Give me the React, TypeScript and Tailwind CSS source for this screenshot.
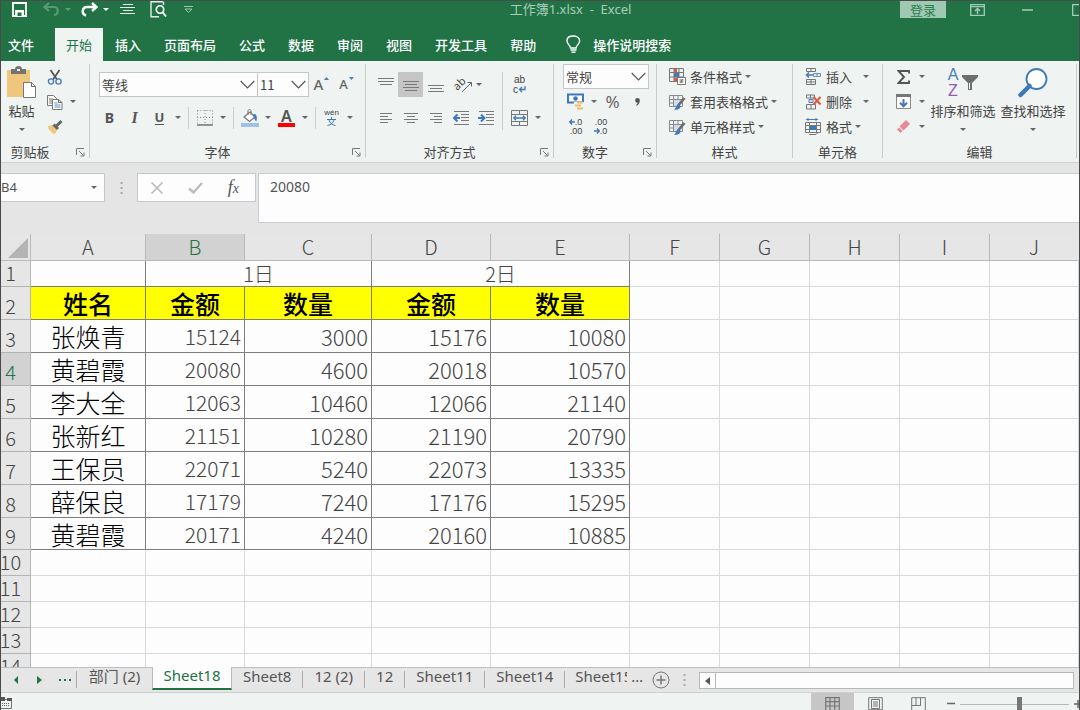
import React from "react";

const CJK = "font-['Noto_Sans_CJK_SC',sans-serif]";
const UI = "font-['Noto_Sans','Noto_Sans_CJK_SC',sans-serif]";
const SMALL = "font-['Liberation_Sans','Noto_Sans_CJK_SC',sans-serif]";

type Kids = { children?: React.ReactNode };

function Ico({ w = 16, h = 16, children }: Kids & { w?: number; h?: number }) {
  return (
    <svg width={w} height={h} viewBox={`0 0 ${w} ${h}`} fill="none" stroke="#666" strokeWidth="1" aria-hidden="true" className="block shrink-0">
      {children}
    </svg>
  );
}

function Tri() {
  return (
    <Ico w={6} h={3}>
      <path d="M0 0h6L3 3z" fill="#666" stroke="none" />
    </Ico>
  );
}

function Caret({ label }: { label: string }) {
  return (
    <button aria-label={`${label}选项`} className="flex h-6 w-3 shrink-0 items-center justify-center">
      <Tri />
    </button>
  );
}

function Tool({ label, active, children }: Kids & { label: string; active?: boolean }) {
  return (
    <button
      aria-label={label}
      className={`flex h-[25px] w-[25px] shrink-0 items-center justify-center ${active ? "bg-[#c6c6c6]" : ""}`}
    >
      {children}
    </button>
  );
}

function Drop({ label, value, className }: { label: string; value: string; className: string }) {
  return (
    <div className={`relative h-[25px] shrink-0 ${className}`}>
      <select aria-label={label} defaultValue={value} className="h-full w-full appearance-none border border-[#c3c6cb] bg-[#fdfdfd] px-0.5 text-[13px] text-[#444]">
        <option>{value}</option>
      </select>
      <div className="pointer-events-none absolute inset-y-0 right-[3px] flex items-center">
        <Ico w={15} h={9}>
          <path d="M.7 1l6.8 6.8L14.300 1" stroke="#555" strokeWidth="1.2" />
        </Ico>
      </div>
    </div>
  );
}

function Group({ name, width, launcher, labelClass = "", children }: Kids & { name: string; width: string; launcher?: boolean; labelClass?: string }) {
  return (
    <section aria-label={name} className={`flex shrink-0 flex-col ${width}`}>
      <div className="mt-[3px] mb-1 flex min-h-0 flex-1 flex-col border-r border-[#c9cccb]">
        <div className="min-h-0 flex-1">{children}</div>
        <div className="flex h-[18px] shrink-0 items-center pt-[5px]">
          <span className={`flex-1 text-center ${labelClass}`}>{name}</span>
          {launcher && (
            <button aria-label={`${name}设置`} className="mr-1 flex w-4 justify-end pt-0.5">
              <Ico w={9} h={9}>
                <path d="M.5 7V.5H8M3 3l4.500 4.500M8 4.500V8H4.500" stroke="#777" />
              </Ico>
            </button>
          )}
        </div>
      </div>
    </section>
  );
}

function Sep() {
  return <div className="mr-[3px] ml-1 h-[22px] w-px shrink-0 bg-[#cfd1d1]" />;
}

function Lines({ d, h = 16 }: { d: string; h?: number }) {
  return (
    <Ico w={16} h={h}>
      <path d={d} stroke="#7a7a7a" />
    </Ico>
  );
}

function MenuRow({ icon, label, caretClass = "ml-[3px]" }: { icon: React.ReactNode; label: string; caretClass?: string }) {
  return (
    <button className="flex h-[25px] items-center">
      {icon}
      <span className="ml-1">{label}</span>
      <span className={caretClass}>
        <Tri />
      </span>
    </button>
  );
}

function BigButton({ icon, label, width }: { icon: React.ReactNode; label: string; width: string }) {
  return (
    <button className={`flex shrink-0 flex-col items-center ${width}`}>
      <span className="flex h-[37px] items-center">{icon}</span>
      <span className="whitespace-nowrap leading-5">{label}</span>
      <span className="flex h-4 items-center">
        <Tri />
      </span>
    </button>
  );
}

const tableIcon = (
  <>
    <path d="M.5 1.500h13v11H.5zM.5 5.500h13M.5 9h13M4.500 1.500v11M9 1.500v11" stroke="#8a8a8a" />
    <path d="M5 6h7v6H5z" fill="#cfdcec" stroke="none" />
    <path d="M15.500 4l-6 7" stroke="#6a6a6a" strokeWidth="2.600" />
    <path d="M9.500 10c-2.500 .5-1.500 3.500-4.500 5.500 3.500 .8 7-.5 6.500-3.500z" fill="#3f79b7" stroke="none" />
  </>
);

function Ribbon() {
  return (
    <div className="flex h-[101px] shrink-0 overflow-hidden bg-[#eff3f2] text-[13px] text-[#444]">
      <Group name="剪贴板" width="w-[89px]" launcher labelClass="pr-[10px]">
        <div className="flex">
          <BigButton
            width="w-[41px]"
            label="粘贴"
            icon={
              <Ico w={31} h={33}>
                <path d="M1 4h23v27H1z" fill="#efc67c" stroke="none" />
                <path d="M5 3h4c0-4 7-4 7 0h4v5H5z" fill="#737373" stroke="none" />
                <path d="M11 3h3v2h-3z" fill="#eee" stroke="none" />
                <path d="M17.500 16.500h8l4 4v11h-12z" fill="#fff" stroke="#777" />
                <path d="M25.500 16.500v4h4" />
              </Ico>
            }
          />
          <div className="flex flex-col">
            <Tool label="剪切">
              <Ico>
                <path d="M3.500 1l6.500 9.500M12.500 1L6 10.500" stroke="#555" strokeWidth="1.700" />
                <circle cx="4" cy="12.500" r="2.600" stroke="#4a7ebb" strokeWidth="1.400" />
                <circle cx="11.500" cy="12.500" r="2.600" stroke="#4a7ebb" strokeWidth="1.400" />
              </Ico>
            </Tool>
            <div className="flex">
              <Tool label="复制">
                <Ico>
                  <path d="M.5 1.500h6l3 3v7h-9zM2 5h4M2 7h4M2 9h3" fill="#fff" stroke="#777" />
                  <path d="M5.500 5.500h6l3.500 3v7H5.500z" fill="#fff" stroke="#777" />
                  <path d="M11.500 5.500v3H15" />
                  <path d="M7.500 9h3M7.500 11h6M7.500 13h6" stroke="#5b8cc4" />
                </Ico>
              </Tool>
              <Caret label="复制" />
            </div>
            <Tool label="格式刷">
              <Ico>
                <path d="M1 7l5-1 4 5-2 4-3-1-1-2-2-1z" fill="#efc67c" stroke="none" />
                <path d="M6.500 5.500l4.500 4.500M9 7.500l5.500-5.500" stroke="#666" strokeWidth="3" />
              </Ico>
            </Tool>
          </div>
        </div>
      </Group>

      <Group name="字体" width="w-[276px]" launcher>
        <div className="flex flex-col gap-2 pt-2">
          <div className="flex pl-[9px]">
            <Drop label="字体" value="等线" className="w-[159px]" />
            <Drop label="字号" value="11" className="-ml-px w-[52px]" />
            <button aria-label="增大字号" className="flex h-[25px] w-[25px] items-center justify-center gap-px">
              <span className={`${UI} text-[15px] font-medium text-[#666]`}>A</span>
              <span className="pb-3"><Ico w={5} h={3}><path d="M0 3h5L2.500 0z" fill="#4a7ebb" stroke="none" /></Ico></span>
            </button>
            <button aria-label="减小字号" className="flex h-[25px] w-[25px] items-center justify-center gap-px">
              <span className={`${UI} text-[13px] font-medium text-[#666]`}>A</span>
              <span className="pb-3"><Ico w={5} h={3}><path d="M0 0h5L2.500 3z" fill="#4a7ebb" stroke="none" /></Ico></span>
            </button>
          </div>
          <div className="flex items-center pl-[7px]">
            <Tool label="加粗"><span className={`${UI} text-sm font-bold text-[#555]`}>B</span></Tool>
            <Tool label="倾斜"><span className="font-['Liberation_Serif',serif] text-base font-bold italic text-[#555]">I</span></Tool>
            <Tool label="下划线"><span className={`${UI} border-b border-[#555] text-[13px] font-bold leading-[13px] text-[#555]`}>U</span></Tool>
            <Caret label="下划线" />
            <Sep />
            <Tool label="边框">
              <Ico>
                <path d="M.5 .5h15v14H.5zM8 0v15M0 7.500h16" stroke="#888" strokeDasharray="1 2" />
                <path d="M0 15h16" stroke="#777" strokeWidth="1.500" />
              </Ico>
            </Tool>
            <Caret label="边框" />
            <Sep />
            <Tool label="填充颜色">
              <Ico w={18} h={18}>
                <path d="M3 8l6-5 5 5-5.500 4.500z" fill="#fff" stroke="#777" strokeWidth="1.200" />
                <path d="M7 6V2c0-2 3-2 3 0v4" stroke="#777" />
                <path d="M12.500 5c4-.5 3.500 5 3 7-2.500-.5-1.500-3-3-4z" fill="#3f79b7" stroke="none" />
                <path d="M0 14h18v4H0z" fill="#9cc3e6" stroke="none" />
              </Ico>
            </Tool>
            <Caret label="填充颜色" />
            <Tool label="字体颜色">
              <span className={`${UI} w-[17px] border-b-4 border-[#f00] text-center text-base font-semibold leading-[14px] text-[#555]`}>A</span>
            </Tool>
            <Caret label="字体颜色" />
            <Sep />
            <Tool label="拼音指南">
              <span className="flex flex-col items-center">
                <span className={`${SMALL} text-[8px] leading-[8px]`}>wén</span>
                <Ico w={9} h={9}><path d="M4.500 0v2M0 2.500h9M7 3C6 6 4 8 .5 8.500M2 3c1 3 3 5 6.500 5.500" stroke="#3f79b7" /></Ico>
              </span>
            </Tool>
            <Caret label="拼音指南" />
          </div>
        </div>
      </Group>

      <Group name="对齐方式" width="w-[188px]" launcher>
        <div className="flex pt-2">
          <div className="flex flex-col gap-2 pl-[7px]">
            <div className="flex">
              <Tool label="顶端对齐"><Lines d="M0 4.500h16M2 7.500h12M0 1.500h16" /></Tool>
              <Tool label="垂直居中" active><Lines d="M0 4.500h16M2 7.500h12M0 10.500h16M2 13.500h12" /></Tool>
              <Tool label="底端对齐"><Lines d="M0 8.500h16M2 11.500h12M0 14.500h16" /></Tool>
              <Tool label="方向">
                <span className="relative flex h-4 w-4 items-center justify-center">
                  <span className={`${UI} -rotate-45 pb-1 text-[11px] leading-3`}>ab</span>
                  <span className="absolute -right-1 bottom-0"><Ico w={12} h={12}><path d="M1 11L10.500 1.500M6.500 1.500h4v4" /></Ico></span>
                </span>
              </Tool>
              <Caret label="方向" />
            </div>
            <div className="flex">
              <Tool label="左对齐"><Lines d="M2 3.500h12M2 6.500h8M2 9.500h12M2 12.500h8" /></Tool>
              <Tool label="居中"><Lines d="M1 3.500h14M4 6.500h8M1 9.500h14M4 12.500h8" /></Tool>
              <Tool label="右对齐"><Lines d="M2 3.500h12M6 6.500h8M2 9.500h12M6 12.500h8" /></Tool>
              <Tool label="减少缩进量">
                <Ico><path d="M1 1.500h15M8 4.500h8M8 7.500h8M8 10.500h8M1 14.500h15" stroke="#7a7a7a" /><path d="M7 8H1.500M4.500 4.500L1 8l3.500 3.500" stroke="#3f79b7" strokeWidth="2" /></Ico>
              </Tool>
              <Tool label="增加缩进量">
                <Ico><path d="M1 1.500h15M8 4.500h8M8 7.500h8M8 10.500h8M1 14.500h15" stroke="#7a7a7a" /><path d="M0 8h5.500M3 4.500L6.500 8 3 11.500" stroke="#3f79b7" strokeWidth="2" /></Ico>
              </Tool>
            </div>
          </div>
          <div className="mr-1 ml-1 w-px bg-[#cfd1d1]" />
          <div className="flex flex-col gap-2">
            <Tool label="自动换行">
              <span className={`${SMALL} flex flex-col text-[10px] leading-[10px]`}>
                <span>ab</span>
                <span className="flex items-center">c<Ico w={8} h={7}><path d="M7 0v3.500H2M4 1L1.500 3.500 4 6" stroke="#3f79b7" strokeWidth="1.300" /></Ico></span>
              </span>
            </Tool>
            <div className="flex">
              <Tool label="合并后居中">
                <Ico w={17}>
                  <path d="M.5 .5h16v15H.5zM.5 4.500h16M.5 11.500h16M8.500 0v4M8.500 12v4" stroke="#777" />
                  <path d="M3 8h11M5 5.800L2.800 8 5 10.200M12 5.800L14.200 8 12 10.200" stroke="#3f79b7" strokeWidth="1.300" />
                </Ico>
              </Tool>
              <Caret label="合并" />
            </div>
          </div>
        </div>
      </Group>

      <Group name="数字" width="w-[103px]" launcher>
        <div className="flex flex-col pl-[9px]">
          <Drop label="数字格式" value="常规" className="w-[86px]" />
          <div className="flex items-center">
            <Tool label="会计数字格式">
              <Ico w={18} h={17}>
                <path d="M1 1.500h15v8H1z" fill="#fff" stroke="#3f79b7" strokeWidth="2" />
                <circle cx="8.500" cy="5.500" r="2.300" fill="#3f79b7" stroke="none" />
                <path d="M7 9h10v8H7z" fill="#eff3f2" stroke="none" />
                <path d="M10 9.500h6M8 12.500h6M10 15.500h6" stroke="#edbd72" strokeWidth="2.200" />
              </Ico>
            </Tool>
            <Caret label="会计数字格式" />
            <Tool label="百分比样式"><span className={`${UI} text-[17px] text-[#666]`}>%</span></Tool>
            <Tool label="千位分隔样式">
              <Ico w={5} h={8}><path d="M2.500 0a2.300 2.300 0 0 1 2.300 2.500c0 2.500-1.300 4.500-3.300 5.300l-.5-.8c1-.6 1.500-1.200 1.600-2.200A2.300 2.300 0 0 1 2.500 0z" fill="#555" stroke="none" /></Ico>
            </Tool>
          </div>
          <div className="flex">
            <Tool label="增加小数位数">
              <span className={`${SMALL} flex flex-col items-end text-[9px] leading-[9px]`}>
                <span className="flex items-center"><Ico w={6} h={6}><path d="M6 3H1M3 .5L.8 3 3 5.500" stroke="#3f79b7" strokeWidth="1.500" /></Ico>.0</span>
                <span>.00</span>
              </span>
            </Tool>
            <Tool label="减少小数位数">
              <span className={`${SMALL} flex flex-col items-end text-[9px] leading-[9px]`}>
                <span>.00</span>
                <span className="flex items-center"><Ico w={6} h={6}><path d="M0 3h5M3 .5L5.200 3 3 5.500" stroke="#3f79b7" strokeWidth="1.500" /></Ico>.0</span>
              </span>
            </Tool>
          </div>
        </div>
      </Group>

      <Group name="样式" width="w-[136px]">
        <div className="flex flex-col items-start pl-3">
          <MenuRow
            label="条件格式"
            icon={
              <Ico w={17} h={17}>
                <path d="M.5 .5h14v13H.5zM.5 4.500h14M.5 9h14M5 .5v13M10 .5v13" stroke="#777" />
                <path d="M5 1h3v3H5zM5 9.500h3v3.500H5z" fill="#e0593a" stroke="none" />
                <path d="M5 5h5v4H5z" fill="#3f79b7" stroke="none" />
                <path d="M8.500 9.500h8v7h-8z" fill="#fff" stroke="#777" />
                <path d="M10.500 12h4M10.500 14h4M13.500 11l-2 4" />
              </Ico>
            }
          />
          <MenuRow label="套用表格格式" icon={<Ico w={17}>{tableIcon}</Ico>} />
          <MenuRow label="单元格样式" icon={<Ico w={17}>{tableIcon}</Ico>} />
        </div>
      </Group>

      <Group name="单元格" width="w-[90px]">
        <div className="flex flex-col items-start pl-3">
          <MenuRow
            label="插入"
            caretClass="ml-[11px]"
            icon={
              <Ico w={17} h={17}>
                <path d="M1.500 .5h9v3h-9zM6 .5v3M1.500 11.500h9v5h-9zM6 11.500v5M1.500 14h9" stroke="#777" />
                <path d="M8.500 5.500h7v3h-7zM12 5.500v3" fill="#dbe8f5" stroke="#6f8fb5" />
                <path d="M8 7H1.500M4 4.500L1.500 7 4 9.500" stroke="#3f79b7" strokeWidth="1.500" />
              </Ico>
            }
          />
          <MenuRow
            label="删除"
            caretClass="ml-[11px]"
            icon={
              <Ico w={17}>
                <path d="M1.500 1h8v3h-8zM5.500 1v3M1.500 10.500h9v4.500h-9zM6 10.500v4.500" stroke="#777" />
                <path d="M4 5.500h4v3H4z" fill="#cfe0f2" stroke="#4a7ebb" />
                <path d="M8.500 3l7 7.500M15.500 3l-7 7.500" stroke="#e0593a" strokeWidth="2" />
              </Ico>
            }
          />
          <MenuRow
            label="格式"
            icon={
              <Ico w={17} h={17}>
                <path d="M1 1.500h12M3 0v3M11 0v3" stroke="#4a7ebb" />
                <path d="M.5 4.500h15v10H.5zM4.500 4.500v10M11.500 4.500v10M.5 7.500h15M.5 11.500h15M4 16.500h7l2-2" stroke="#777" />
                <path d="M5 8h6v4H5z" fill="#3f79b7" stroke="none" />
              </Ico>
            }
          />
        </div>
      </Group>

      <Group name="编辑" width="w-[194px]">
        <div className="flex">
          <div className="flex flex-col pl-2">
            <div className="flex items-center">
              <Tool label="自动求和"><Ico w={13} h={14}><path d="M12 3.500V1H1.500l5.500 6-5.500 6H12v-2.500" stroke="#555" strokeWidth="1.900" /></Ico></Tool>
              <Caret label="自动求和" />
            </div>
            <div className="flex items-center">
              <Tool label="填充">
                <Ico w={15}>
                  <path d="M.5 1.500h14v13H.5z" fill="#fff" stroke="#888" />
                  <path d="M0 1.500h15" stroke="#777" strokeWidth="3" />
                  <path d="M7.500 5v7M4 8.800l3.500 3.500L11 8.800" stroke="#3f79b7" strokeWidth="2" />
                </Ico>
              </Tool>
              <Caret label="填充" />
            </div>
            <div className="flex items-center">
              <Tool label="清除">
                <Ico w={15} h={15}>
                  <path d="M10 1l4 4-6.500 6.500-4-4z" fill="#e88a96" stroke="none" />
                  <path d="M3 8.500L6.500 12 4.500 14 1 10.500z" fill="#e88a96" stroke="none" />
                </Ico>
              </Tool>
              <Caret label="清除" />
            </div>
          </div>
          <div className="flex">
            <BigButton
              width="w-[70px]"
              label="排序和筛选"
              icon={
                <span className={`${SMALL} flex items-center`}>
                  <span className="flex flex-col items-center text-base leading-[16px]">
                    <span className="text-[#4a7ebb]">A</span>
                    <span className="text-[#9757b5]">Z</span>
                  </span>
                  <span className="ml-1">
                    <Ico w={16} h={17}><path d="M0 1h16v2l-6 6v7H6V9L0 3z" fill="#6e6e6e" stroke="none" /><path d="M7.500 9v6" stroke="#fff" /></Ico>
                  </span>
                </span>
              }
            />
            <BigButton
              width="w-[70px]"
              label="查找和选择"
              icon={
                <Ico w={30} h={30}>
                  <circle cx="18.500" cy="11" r="10" fill="#fff" stroke="#3f79b7" strokeWidth="1.800" />
                  <path d="M11.500 18L2.500 27" stroke="#3f79b7" strokeWidth="4.500" strokeLinecap="round" />
                </Ico>
              }
            />
          </div>
        </div>
      </Group>
    </div>
  );
}

function TitleBar() {
  return (
    <header className="flex h-[27px] shrink-0 items-start bg-[#217346] text-[13px] leading-4">
      <div className="flex h-4 w-60 shrink-0 items-center pl-[11px]">
        <button aria-label="保存" className="w-[31px]">
          <Ico w={15} h={15}><path d="M1 1h13v13H1z" stroke="#fff" strokeWidth="1.800" /><path d="M3 8h9v6H3z" fill="#fff" stroke="none" /><path d="M5.500 10.500h4V14h-4z" fill="#217346" stroke="none" /></Ico>
        </button>
        <button aria-label="撤消" className="w-[22px]">
          <Ico w={17} h={14}><path d="M6 1L1.500 5 6 9M2 5h9c5 0 5 7 0 8" stroke="#569877" strokeWidth="2.200" /></Ico>
        </button>
        <span className="w-4 opacity-50"><Ico w={6} h={3}><path d="M0 0h6L3 3z" fill="#9cc5ae" stroke="none" /></Ico></span>
        <button aria-label="恢复" className="w-[22px]">
          <Ico w={17} h={15}><path d="M11 1l4.500 4L11 9M15 5H6c-5 0-6 7-1 8.500" stroke="#fff" strokeWidth="2.400" /></Ico>
        </button>
        <span className="w-[17px]"><Ico w={6} h={3}><path d="M0 0h6L3 3z" fill="#fff" stroke="none" /></Ico></span>
        <button aria-label="居中" className="w-[30px]">
          <Ico w={15} h={12}><path d="M3 1.500h10M0 4.500h15M3 7.500h10M0 10.500h15" stroke="#e4efe9" strokeWidth="1.200" /></Ico>
        </button>
        <button aria-label="打印预览" className="w-[34px]">
          <Ico w={17} h={17}><path d="M13.500 4V1.500L12 .7H1v15h8" stroke="#e4efe9" strokeWidth="1.400" /><circle cx="10" cy="8.500" r="3.700" stroke="#fff" strokeWidth="1.600" /><path d="M12.500 11l3.500 4.500" stroke="#fff" strokeWidth="2" /></Ico>
        </button>
        <button aria-label="自定义快速访问工具栏">
          <Ico w={9} h={7}><path d="M0 .5h9" stroke="#9cc5ae" /><path d="M1 3h7L4.500 6.500z" stroke="#9cc5ae" /></Ico>
        </button>
      </div>
      <h1 className={`${UI} flex-1 whitespace-pre text-center text-[#a9cdb9]`}>工作簿1.xlsx  -  Excel</h1>
      <div className="flex h-[17px] w-[179px] shrink-0 items-center">
        <button className="h-[17px] w-[46px] shrink-0 bg-[#9fc9b2] text-[#2c7a50]">登录</button>
        <button aria-label="功能区显示选项" className="ml-6 shrink-0">
          <Ico w={15} h={12}><path d="M.7 .7h13.600v10.600H.7zM.7 2.700h13.600" stroke="#a5ccb7" strokeWidth="1.300" /><path d="M7.500 10V5M5 7l2.500-2.500L10 7" stroke="#a5ccb7" strokeWidth="1.400" /></Ico>
        </button>
        <button aria-label="最小化" className="ml-[37px] shrink-0"><Ico w={11} h={2}><path d="M0 1h11" stroke="#a5ccb7" strokeWidth="1.500" /></Ico></button>
        <button aria-label="最大化" className="ml-[39px] shrink-0"><Ico w={12} h={12}><path d="M.7 .7h10.600v10.600H.7z" stroke="#a5ccb7" strokeWidth="1.300" /></Ico></button>
      </div>
    </header>
  );
}

const menu = ["插入", "页面布局", "公式", "数据", "审阅", "视图", "开发工具", "帮助"];

function MenuBar() {
  return (
    <nav aria-label="功能区" className="flex h-[33px] shrink-0 items-stretch gap-px overflow-hidden bg-[#217346] text-[13px] font-medium text-white">
      <button className="w-[53px] shrink-0 pl-[7px] text-left">文件</button>
      <button className="shrink-0 bg-[#eff3f2] px-[11px] font-normal text-[#217346]">开始</button>
      {menu.map((m) => (
        <button key={m} className="shrink-0 px-[11px]">{m}</button>
      ))}
      <button className="flex shrink-0 items-center gap-3 pl-[18px]">
        <Ico w={15} h={19}>
          <path d="M4.500 13c0-2.500-3.500-3.500-3.500-7.300C1 2.500 4 1 7.300 1s6.300 1.700 6.300 4.700c0 3.800-3.500 4.800-3.500 7.300z" stroke="#fff" strokeWidth="1.400" />
          <path d="M4.500 15h6M5.500 17.300h4" stroke="#fff" strokeWidth="1.500" />
        </Ico>
        操作说明搜索
      </button>
    </nav>
  );
}

function FormulaBar() {
  return (
    <div className={`flex shrink-0 border-t border-[#d0d3d2] bg-[#e5e5e5] pt-2.5 ${UI}`}>
      <div className="flex h-[29px] w-[104px] shrink-0 items-center border border-l-0 border-[#c3c9d0] bg-[#fdfdfd] pr-[7px]">
        <input aria-label="名称框" defaultValue="B4" className="min-w-0 flex-1 bg-transparent text-[13px] text-[#555] outline-none" />
        <button aria-label="名称列表"><Tri /></button>
      </div>
      <div className="flex h-[29px] w-8 shrink-0 items-center justify-center">
        <Ico w={3} h={12}><path d="M1.500 0v12" stroke="#aaa" strokeWidth="2" strokeDasharray="2 3" /></Ico>
      </div>
      <div className="flex h-[29px] w-[119px] shrink-0 items-center justify-around border border-[#c3c9d0] bg-[#fdfdfd] pr-1">
        <button aria-label="取消"><Ico w={14} h={12}><path d="M1.500 .5l11 11M12.500 .5l-11 11" stroke="#bdbdbd" strokeWidth="1.700" /></Ico></button>
        <button aria-label="输入"><Ico w={15} h={12}><path d="M1 6.500l4.500 4L14 1" stroke="#bdbdbd" strokeWidth="2.400" /></Ico></button>
        <button aria-label="插入函数" className="font-['Liberation_Serif',serif] text-lg italic leading-5 text-[#555]">
          f<span className="text-sm">x</span>
        </button>
      </div>
      <textarea
        aria-label="编辑栏"
        defaultValue="20080"
        className="ml-[2px] h-[50px] min-w-0 flex-1 resize-none border border-r-0 border-[#c8cdd3] bg-[#fdfdfd] px-[11px] pt-[3px] text-sm leading-5 text-[#555] outline-none"
      />
    </div>
  );
}

const cols = ["A", "B", "C", "D", "E", "F", "G", "H", "I", "J"];
const data: [string, number, number, number, number][] = [
  ["张焕青", 15124, 3000, 15176, 10080],
  ["黄碧霞", 20080, 4600, 20018, 10570],
  ["李大全", 12063, 10460, 12066, 21140],
  ["张新红", 21151, 10280, 21190, 20790],
  ["王保员", 22071, 5240, 22073, 13335],
  ["薛保良", 17179, 7240, 17176, 15295],
  ["黄碧霞", 20171, 4240, 20160, 10885],
];

const light = "border-r border-b border-[#d5dadc] p-0";
const dark = "border-r border-b border-[#7d7d7d] p-0";

function Blank({ n }: { n: number }) {
  return (
    <>
      {Array.from({ length: n }, (_, i) => (
        <td key={i} className={light} />
      ))}
    </>
  );
}

function RowHead({ n }: { n: number }) {
  return (
    <th
      scope="row"
      className={`border-r border-b border-[#b4b4b4] p-0 pr-[10px] pb-px align-bottom font-light leading-6 ${n === 4 ? "bg-[#d2d2d2] text-[#217346]" : "bg-[#e6e6e6]"}`}
    >
      <span className="flex justify-center">{n}</span>
    </th>
  );
}

function cellClass(j: number) {
  if (j === 0) return "text-center text-[25px] text-black";
  if (j === 1) return "pr-[3px] text-right text-[21px]";
  return "pr-[3px] text-right text-[22px]";
}

function Sheet() {
  return (
    <main className="min-h-0 flex-1 overflow-hidden bg-[#e5e5e5] pt-[11px]">
      <table className={`w-full table-fixed border-separate border-spacing-0 text-xl font-light text-[#444] ${CJK}`}>
        <colgroup>
          <col className="w-[30px]" />
          <col className="w-[115px]" />
          <col className="w-[99px]" />
          <col className="w-[127px]" />
          <col className="w-[119px]" />
          <col className="w-[139px]" />
          <col className="w-[90px]" />
          <col className="w-[90px]" />
          <col className="w-[90px]" />
          <col className="w-[90px]" />
          <col />
        </colgroup>
        <thead>
          <tr className="h-[27px] bg-[#e6e6e6] leading-[26px]">
            <th aria-label="全选" className="border-r border-b border-[#b9b9b9] p-0 align-bottom">
              <span className="flex justify-end pr-0.5 pb-0.5"><Ico w={20} h={20}><path d="M20 0v20H0z" fill="#b4b4b4" stroke="none" /></Ico></span>
            </th>
            {cols.map((c) => (
              <th key={c} scope="col" className={`border-r border-b border-[#b9b9b9] p-0 font-light ${c === "J" ? "border-r-transparent" : ""} ${c === "B" ? "bg-[#d2d2d2] text-[#217346]" : ""}`}>
                {c}
              </th>
            ))}
          </tr>
        </thead>
        <tbody className="bg-[#fdfdfd]">
          <tr className="h-[26px] text-center leading-[25px]">
            <RowHead n={1} />
            <td className={dark} />
            <td className={dark} colSpan={2}>1日</td>
            <td className={dark} colSpan={2}>2日</td>
            <Blank n={5} />
          </tr>
          <tr className="h-[33px] leading-[30px]">
            <RowHead n={2} />
            {["姓名", "金额", "数量", "金额", "数量"].map((t, i) => (
              <td key={i} className={`${dark} bg-[#ff0] text-center text-[25px] font-medium text-black`}>{t}</td>
            ))}
            <Blank n={5} />
          </tr>
          {data.map((r, i) => (
            <tr key={i} className={`leading-[30px] ${i === 6 ? "h-8" : "h-[33px]"}`}>
              <RowHead n={i + 3} />
              {r.map((v, j) => (
                <td key={j} className={`${dark} ${cellClass(j)}`}>{v}</td>
              ))}
              <Blank n={5} />
            </tr>
          ))}
          {[10, 11, 12, 13, 14].map((n) => (
            <tr key={n} className="h-[26px]">
              <RowHead n={n} />
              <Blank n={10} />
            </tr>
          ))}
        </tbody>
      </table>
    </main>
  );
}

function SheetTab({ name, clip }: { name: string; clip?: boolean }) {
  return (
    <>
      <button className={`shrink-0 whitespace-nowrap text-left ${clip ? "ml-[10px] w-[52px] overflow-hidden" : "mx-[11px]"}`}>{name}</button>
      {!clip && <div className="mt-[3px] h-[17px] w-px shrink-0 bg-[#aaa]" />}
    </>
  );
}

function TabBar() {
  return (
    <div className={`flex h-[25px] shrink-0 items-start border-t border-[#b9bfc6] bg-[#e6e6e6] text-[15px] leading-[17px] text-[#555] ${UI}`}>
      <div className="flex h-6 w-[75px] shrink-0 items-center pl-[13px]">
        <button aria-label="上一个工作表"><Ico w={4} h={8}><path d="M4 0v8L0 4z" fill="#217346" stroke="none" /></Ico></button>
        <button aria-label="下一个工作表" className="ml-[19px]"><Ico w={5} h={8}><path d="M0 0v8l5-4z" fill="#217346" stroke="none" /></Ico></button>
        <button aria-label="更多工作表" className="ml-[17px]"><Ico w={12} h={2}><path d="M0 1h2M5 1h2M10 1h2" stroke="#217346" strokeWidth="2" /></Ico></button>
      </div>
      <div className="mt-[3px] h-[17px] w-px shrink-0 bg-[#aaa]" />
      <button className="w-[75px] shrink-0 whitespace-nowrap">部门 (2)</button>
      <button aria-current="page" className="-mt-px flex h-[23px] w-20 shrink-0 justify-center border-x border-b-2 border-x-[#bbb] border-b-[#217346] bg-[#fdfdfd] text-[#217346]">Sheet18</button>
      <SheetTab name="Sheet8" />
      <SheetTab name="12 (2)" />
      <SheetTab name="12" />
      <SheetTab name="Sheet11" />
      <SheetTab name="Sheet14" />
      <SheetTab name="Sheet15" clip />
      <span className="ml-1">…</span>
      <button aria-label="新工作表" className="mt-[3px] ml-[9px] shrink-0">
        <Ico w={18} h={18}><circle cx="9" cy="9" r="8" stroke="#777" /><path d="M9 4.500v9M4.500 9h9" stroke="#777" strokeWidth="1.500" /></Ico>
      </button>
      <div className="mx-[13px] mt-1.5 shrink-0"><Ico w={3} h={12}><path d="M1.500 0v12" stroke="#aaa" strokeWidth="2" strokeDasharray="2 3" /></Ico></div>
      <div className="mt-1 mr-[5px] flex h-[17px] flex-1 border border-[#b5b8bb] bg-[#fdfdfd]">
        <button aria-label="向左滚动" className="flex w-4 items-center justify-center border-r border-[#b5b8bb]"><Ico w={5} h={8}><path d="M5 0v8L0 4z" fill="#555" stroke="none" /></Ico></button>
      </div>
    </div>
  );
}

function StatusBar() {
  return (
    <footer className="flex h-[18px] shrink-0 items-start justify-between overflow-hidden border-t border-[#cdd0d0] bg-[#eff3f2]">
      <button aria-label="录制宏" className="pt-1">
        <Ico w={11} h={12}><path d="M0 2.500h10.500v9H0" stroke="#777" /><path d="M0 0h4v4H0zM6 1h5v3H6z" fill="#555" stroke="none" /><path d="M1 6.500h8M1 8.500h8" strokeDasharray="1 1" /></Ico>
      </button>
      <div className="flex shrink-0 items-start">
        <button aria-label="普通" className="flex w-[43px] justify-center bg-[#c6c6c6] pt-1 pb-2">
          <Ico w={15} h={14}><path d="M.7 .7h13.600v13H.7zM5 .7v13M9.700 .7v13M.7 4.700h13.600M.7 9h13.600" stroke="#777" strokeWidth="1.200" /></Ico>
        </button>
        <button aria-label="页面布局视图" className="flex w-[43px] justify-center pt-1">
          <Ico w={15} h={14}><path d="M.7 .7h13.600v12H.7zM3.500 2.500h8v9h-8zM5 5h5M5 7h5M5 9h5" stroke="#777" /></Ico>
        </button>
        <button aria-label="分页预览" className="flex w-[43px] justify-center pt-1">
          <Ico w={15} h={14}><path d="M.7 14V.7h13.600V14M5 .7v8M9.500 .7v8M.7 8.500h9" stroke="#777" /></Ico>
        </button>
        <button aria-label="缩小" className="ml-[7px] pt-[9px]"><Ico w={8} h={3}><path d="M0 1.500h8" strokeWidth="1.500" /></Ico></button>
        <input
          type="range"
          aria-label="缩放"
          defaultValue={55}
          className="mt-1 ml-[5px] h-3.5 w-[109px] appearance-none bg-[linear-gradient(#b5b8b8,#b5b8b8)] bg-[length:100%_1px] bg-center bg-no-repeat [&::-webkit-slider-thumb]:h-3.5 [&::-webkit-slider-thumb]:w-[5px] [&::-webkit-slider-thumb]:appearance-none [&::-webkit-slider-thumb]:bg-[#777]"
        />
        <button aria-label="放大" className="ml-[5px] w-[5px] overflow-hidden pt-[7px]"><Ico w={8} h={8}><path d="M0 4h8M4 0v8" strokeWidth="1.500" /></Ico></button>
      </div>
    </footer>
  );
}

export default function App() {
  return (
    <div className={`flex h-screen min-w-0 flex-col overflow-hidden border-x border-t border-[#4a4a4a] bg-[#e6e6e6] ${CJK}`}>
      <TitleBar />
      <MenuBar />
      <Ribbon />
      <FormulaBar />
      <Sheet />
      <TabBar />
      <StatusBar />
    </div>
  );
}
